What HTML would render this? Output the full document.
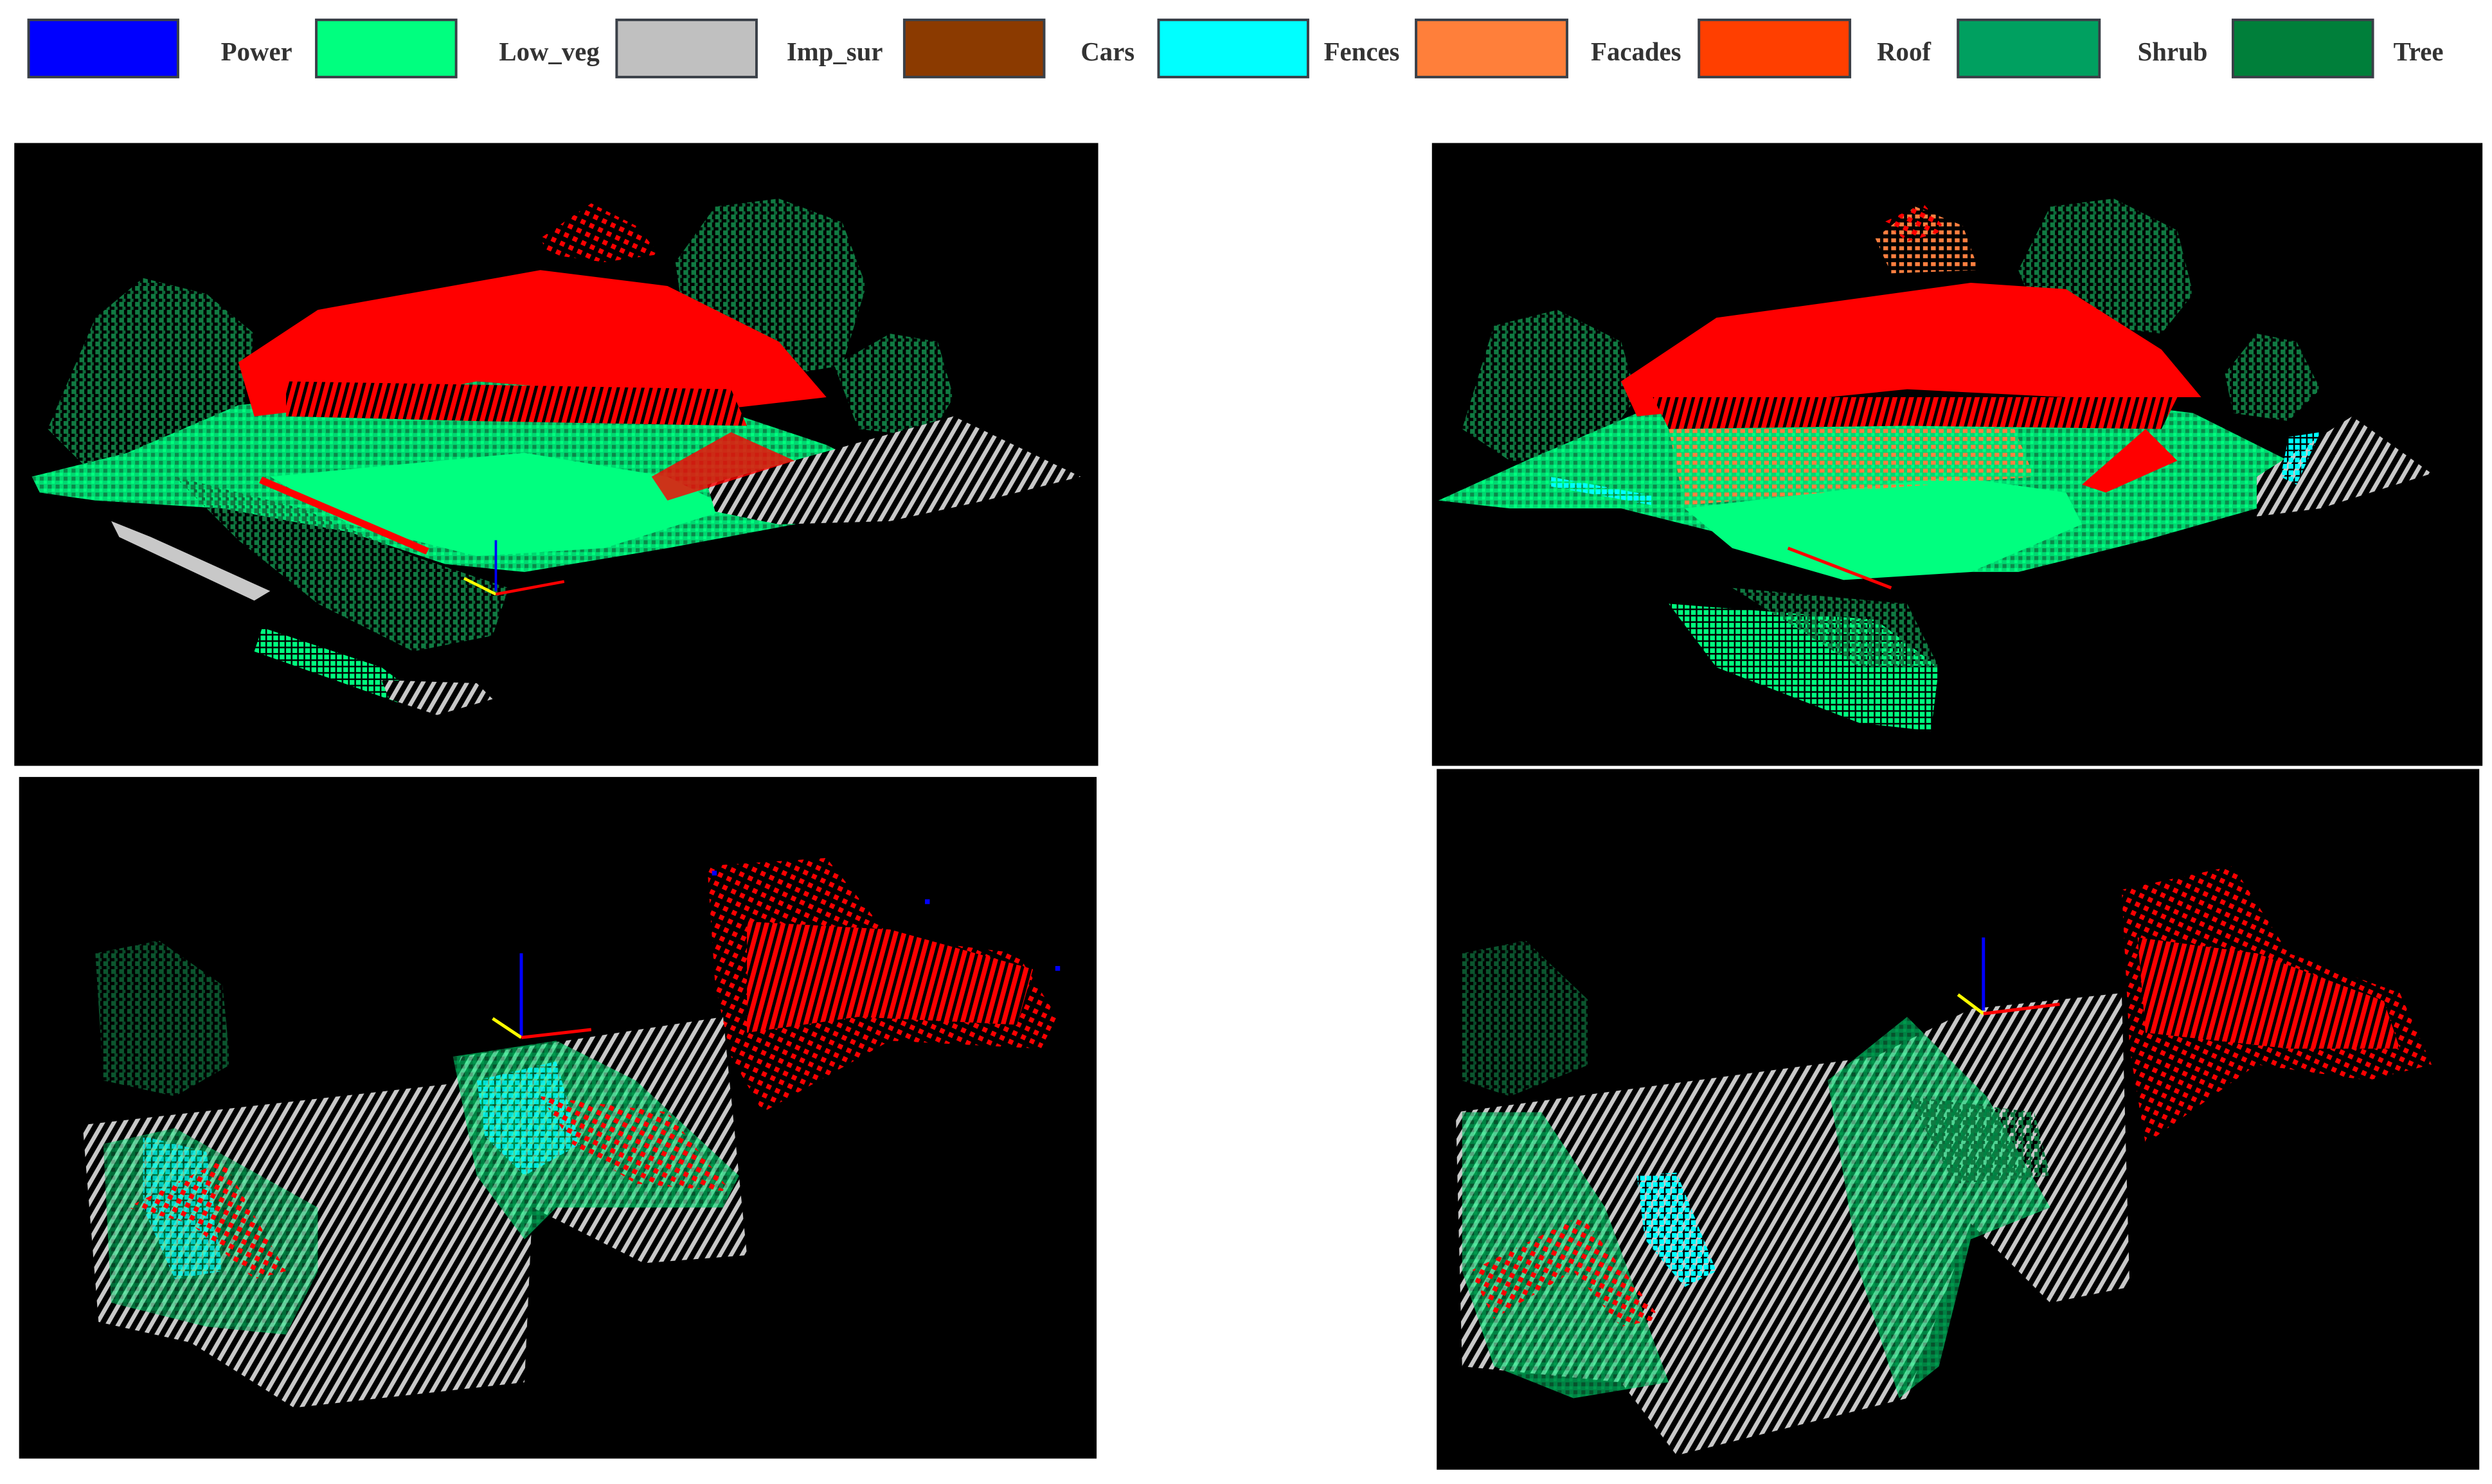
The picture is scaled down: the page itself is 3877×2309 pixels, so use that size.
<!DOCTYPE html>
<html><head><meta charset="utf-8"><style>
html,body{margin:0;padding:0;background:#fff;width:3877px;height:2309px;overflow:hidden}
svg{display:block}
</style></head><body>
<svg width="3877" height="2309" viewBox="0 0 1568 934" preserveAspectRatio="none" xmlns="http://www.w3.org/2000/svg">
<defs>
<pattern id="gs" width="6" height="6" patternUnits="userSpaceOnUse" patternTransform="rotate(30)">
<rect width="6" height="6" fill="#000"/><rect width="2.6" height="6" fill="#c8c8c8"/></pattern>
<pattern id="rs" width="5" height="5" patternUnits="userSpaceOnUse" patternTransform="rotate(15)">
<rect width="5" height="5" fill="#000"/><rect width="3" height="5" fill="#ff0000"/></pattern>
<pattern id="rd" width="6" height="6" patternUnits="userSpaceOnUse" patternTransform="rotate(25)">
<rect width="3" height="3" fill="#ff0000"/></pattern>
<pattern id="td" width="5" height="5" patternUnits="userSpaceOnUse">
<rect width="3" height="3" fill="#107a42"/><rect x="2" y="3" width="2" height="2" fill="#0d6a3a"/></pattern>
<pattern id="ld" width="4" height="4" patternUnits="userSpaceOnUse">
<rect width="3" height="3" fill="#00ff7f"/></pattern>
<pattern id="sd" width="5" height="5" patternUnits="userSpaceOnUse">
<rect width="5" height="5" fill="#00d870"/><rect width="2.5" height="2.5" fill="#0a8a4a"/><rect x="2.5" y="2.5" width="2" height="2" fill="#00ff7f"/></pattern>
<pattern id="cd" width="4" height="4" patternUnits="userSpaceOnUse">
<rect width="3" height="3" fill="#00ffff"/></pattern>
<pattern id="od" width="5" height="5" patternUnits="userSpaceOnUse">
<rect width="3" height="2.5" fill="#ff8040"/></pattern>
</defs>
<rect width="1568" height="934" fill="#fff"/>
<g stroke="#3a4048" stroke-width="1.6">
<rect x="18" y="12.5" width="94" height="36" fill="#0000ff"/>
<rect x="199" y="12.5" width="88" height="36" fill="#00ff7f"/>
<rect x="388" y="12.5" width="88" height="36" fill="#c0c0c0"/>
<rect x="569" y="12.5" width="88" height="36" fill="#8b3a00"/>
<rect x="729" y="12.5" width="94" height="36" fill="#00ffff"/>
<rect x="891" y="12.5" width="95" height="36" fill="#ff7f3a"/>
<rect x="1069" y="12.5" width="95" height="36" fill="#ff3f00"/>
<rect x="1232" y="12.5" width="89" height="36" fill="#00a060"/>
<rect x="1405" y="12.5" width="88" height="36" fill="#007f3a"/>
</g>
<g font-family="Liberation Serif, serif" font-weight="bold" font-size="16.5" fill="#333">
<text x="139" y="38">Power</text>
<text x="314" y="38">Low_veg</text>
<text x="495" y="38">Imp_sur</text>
<text x="680" y="38">Cars</text>
<text x="833" y="38">Fences</text>
<text x="1001" y="38">Facades</text>
<text x="1181" y="38">Roof</text>
<text x="1345" y="38">Shrub</text>
<text x="1506" y="38">Tree</text>
</g>

<rect x="9" y="90" width="682" height="392" fill="#000"/>
<g>
<path d="M30,270 L60,200 L90,175 L130,185 L160,210 L150,280 L120,310 L60,300 Z" fill="url(#td)"/>
<path d="M425,165 L450,130 L490,125 L530,140 L545,180 L530,230 L500,235 L460,210 L430,200 Z" fill="url(#td)"/>
<path d="M525,230 L560,210 L590,215 L600,250 L585,275 L540,270 Z" fill="url(#td)"/>
<path d="M20,300 L80,285 L150,255 L300,240 L430,250 L520,280 L560,300 L500,330 L420,345 L330,360 L280,355 L220,335 L140,320 L60,315 L25,310 Z" fill="url(#sd)"/>
<path d="M170,300 L330,285 L420,300 L460,320 L380,345 L300,350 L220,330 Z" fill="#00ff7f"/>
<path d="M110,300 L190,320 L260,350 L320,370 L310,400 L260,410 L200,380 L150,340 Z" fill="url(#td)"/>
<path d="M165,395 L240,420 L260,435 L250,442 L160,410 Z" fill="url(#ld)"/>
<path d="M240,428 L300,430 L310,440 L275,450 L245,440 Z" fill="url(#gs)"/>
<path d="M445,305 L600,262 L680,300 L620,315 L560,328 L490,330 L450,322 Z" fill="url(#gs)"/>
<path d="M70,328 L95,338 L170,372 L160,378 L75,338 Z" fill="#c8c8c8"/>
<path d="M150,228 L200,195 L340,170 L420,180 L490,215 L520,250 L450,258 L400,248 L300,240 L220,255 L160,262 Z" fill="#ff0000"/>
<path d="M180,240 L460,245 L470,268 L300,265 L180,262 Z" fill="url(#rs)"/>
<path d="M340,150 L372,128 L400,142 L415,160 L380,165 L345,160 Z" fill="url(#rd)"/>
<path d="M410,300 L460,272 L500,290 L420,315 Z" fill="#ff0000" opacity=".8"/>
<path d="M165,300 L270,345 L268,349 L163,304 Z" fill="#ff0000"/>
<line x1="312" y1="340" x2="312" y2="372" stroke="#0000ff" stroke-width="1.5"/>
<line x1="292" y1="364" x2="312" y2="374" stroke="#ffff00" stroke-width="1.8"/>
<line x1="312" y1="374" x2="355" y2="366" stroke="#ff0000" stroke-width="1.8"/>
</g>

<rect x="901" y="90" width="661" height="392" fill="#000"/>
<g>
<path d="M920,270 L940,205 L980,195 L1020,215 L1030,250 L1000,290 L950,290 Z" fill="url(#td)"/>
<path d="M1270,170 L1290,130 L1330,125 L1370,145 L1380,185 L1360,210 L1320,205 L1280,195 Z" fill="url(#td)"/>
<path d="M1400,235 L1420,210 L1445,215 L1460,245 L1440,265 L1405,260 Z" fill="url(#td)"/>
<path d="M905,315 L960,290 L1030,260 L1150,250 L1300,250 L1380,260 L1440,290 L1420,320 L1350,340 L1270,360 L1180,360 L1100,340 L1020,320 L950,320 Z" fill="url(#sd)"/>
<path d="M1060,320 L1230,300 L1300,310 L1310,330 L1240,360 L1160,365 L1090,345 Z" fill="#00ff7f"/>
<path d="M1050,380 L1180,390 L1220,420 L1215,460 L1170,455 L1080,420 Z" fill="url(#ld)"/>
<path d="M1090,370 L1200,380 L1220,420 L1170,420 Z" fill="url(#td)"/>
<path d="M1420,300 L1480,262 L1530,298 L1460,320 L1420,325 Z" fill="url(#gs)"/>
<path d="M1050,270 L1260,252 L1280,300 L1150,310 L1060,318 Z" fill="url(#od)"/>
<path d="M1020,240 L1080,200 L1240,178 L1300,182 L1360,220 L1385,250 L1300,250 L1200,245 L1100,255 L1030,262 Z" fill="#ff0000"/>
<path d="M1040,250 L1370,250 L1360,270 L1200,268 L1050,270 Z" fill="url(#rs)"/>
<path d="M1180,150 L1205,130 L1235,142 L1245,170 L1190,172 Z" fill="url(#od)"/>
<path d="M1185,140 L1210,128 L1225,145 L1200,152 Z" fill="url(#rd)"/>
<path d="M1310,305 L1350,270 L1370,290 L1325,310 Z" fill="#ff0000"/>
<path d="M975,300 L1040,312 L1040,318 L975,306 Z" fill="url(#cd)"/>
<path d="M1440,275 L1460,272 L1445,305 L1435,300 Z" fill="url(#cd)"/>
<line x1="1125" y1="345" x2="1190" y2="370" stroke="#ff0000" stroke-width="2"/>
</g>

<rect x="12" y="489" width="678" height="429" fill="#000"/>
<g>
<path d="M52,708 L285,682 L290,665 L455,640 L470,790 L405,795 L335,760 L330,870 L185,886 L120,845 L62,832 Z" fill="url(#gs)"/>
<path d="M60,600 L100,592 L140,620 L145,670 L110,690 L65,680 Z" fill="url(#td)" opacity=".7"/>
<path d="M445,545 L520,540 L560,590 L640,600 L665,640 L655,660 L560,655 L480,700 L460,665 L450,620 Z" fill="url(#rd)"/>
<path d="M470,580 L560,585 L650,610 L640,645 L540,640 L470,650 Z" fill="url(#rs)"/>
<path d="M285,665 L350,655 L400,680 L465,740 L455,760 L400,760 L350,760 L330,780 L300,740 Z" fill="url(#sd)" opacity=".6"/>
<path d="M300,680 L350,668 L365,720 L330,740 L305,715 Z" fill="url(#cd)" opacity=".8"/>
<path d="M340,690 L420,700 L460,750 L400,745 L360,720 Z" fill="url(#rd)"/>
<path d="M65,720 L110,710 L200,760 L200,800 L180,840 L130,835 L70,820 Z" fill="url(#sd)" opacity=".5"/>
<path d="M90,715 L130,725 L140,800 L110,805 L90,760 Z" fill="url(#cd)" opacity=".7"/>
<path d="M80,760 L140,730 L180,800 L160,805 L120,770 Z" fill="url(#rd)"/>
<line x1="328" y1="600" x2="328" y2="652" stroke="#0000ff" stroke-width="2"/>
<line x1="310" y1="641" x2="328" y2="653" stroke="#ffff00" stroke-width="2"/>
<line x1="328" y1="653" x2="372" y2="648" stroke="#ff0000" stroke-width="2"/>
<rect x="582" y="566" width="3" height="3" fill="#0000ff"/><rect x="664" y="608" width="3" height="3" fill="#0000ff"/>
<rect x="448" y="548" width="3" height="3" fill="#0000ff"/>
</g>

<rect x="904" y="484" width="656" height="441" fill="#000"/>
<g>
<path d="M916,700 L1180,665 L1240,635 L1335,625 L1340,810 L1290,820 L1240,770 L1200,880 L1055,916 L1020,870 L920,860 Z" fill="url(#gs)"/>
<path d="M920,600 L960,592 L1000,630 L1000,670 L950,690 L920,680 Z" fill="url(#td)" opacity=".7"/>
<path d="M1150,680 L1200,640 L1250,690 L1290,760 L1240,780 L1220,860 L1195,880 L1170,800 Z" fill="url(#sd)" opacity=".6"/>
<path d="M1200,690 L1280,700 L1290,740 L1230,745 Z" fill="url(#td)"/>
<path d="M920,700 L970,700 L1010,760 L1050,870 L990,880 L940,860 L920,800 Z" fill="url(#sd)" opacity=".6"/>
<path d="M1030,740 L1055,738 L1080,800 L1060,810 L1035,780 Z" fill="url(#cd)"/>
<path d="M925,800 L995,765 L1045,830 L1020,835 L990,800 L940,830 Z" fill="url(#rd)"/>
<path d="M1335,560 L1405,545 L1440,600 L1510,625 L1530,670 L1490,680 L1420,670 L1350,720 L1340,660 Z" fill="url(#rd)"/>
<path d="M1345,590 L1420,600 L1500,630 L1510,660 L1440,660 L1350,650 Z" fill="url(#rs)"/>
<line x1="1248" y1="590" x2="1248" y2="636" stroke="#0000ff" stroke-width="2"/>
<line x1="1232" y1="626" x2="1248" y2="638" stroke="#ffff00" stroke-width="2"/>
<line x1="1248" y1="638" x2="1296" y2="632" stroke="#ff0000" stroke-width="2"/>
</g>
</svg>
</body></html>
